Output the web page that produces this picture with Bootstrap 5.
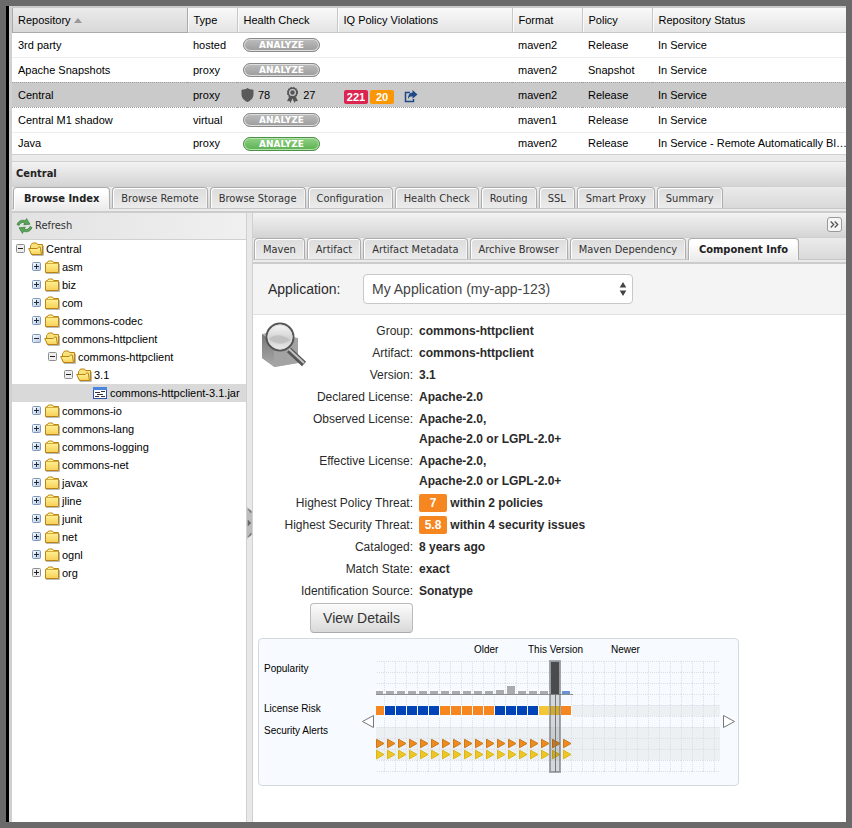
<!DOCTYPE html>
<html lang="en">
<head>
<meta charset="utf-8">
<meta name="viewport" content="width=device-width, initial-scale=1">
<title>Repositories</title>
<link href="https://cdn.jsdelivr.net/npm/bootstrap@5.3.0/dist/css/bootstrap.min.css" rel="stylesheet">
<style>
  :root { --line: #d0d0d0; --ui: "DejaVu Sans Condensed", "Noto Sans", sans-serif; --data: "Liberation Sans", Arial, sans-serif; }
  body { background: #6a6a6a; padding: 6px; font: 11px/16px var(--data); color: #000; }
  .frame { background: #ebebeb; border-left: 3px solid #000; }
  .shell { border-left: 3px solid var(--line); }

  /* Repository grid */
  .repo-grid { table-layout: fixed; background: #fff; border-top: 2px solid #cacaca; border-bottom: 1px solid var(--line); }
  .repo-grid th { height: 25px; padding: 0 6px; font-weight: 400; border-right: 1px solid #c8c8c8; border-bottom: 1px solid #c8c8c8; background: linear-gradient(#f9f9f9, #e4e4e4); box-shadow: inset 1px 0 0 #fafafa; }
  .repo-grid th.sorted { background: linear-gradient(#ebebeb, #d8d8d8); border-color: #aaa; box-shadow: inset 1px 0 0 #aaa; }
  .repo-grid th:last-child { border-right: 0; }
  .repo-grid td { height: 25px; padding: 0 6px; border-bottom: 1px solid #ededed; white-space: nowrap; }
  .repo-grid td:last-child { padding-right: 0; }
  .repo-grid tr:has(+ .picked) td { border-bottom: 0; }
  .repo-grid tr.picked td { background: #cacaca; border-top: 1px dotted #a0a0a0; border-bottom: 1px dotted #a0a0a0; }
  .repo-grid tbody tr:last-child td { height: 22px; border: 0; }
  .pill { display: block; width: 77px; height: 14px; margin-top: 1px; padding: 0; border: 1px solid #8a8a8a; border-radius: 7px; box-shadow: inset 0 0 0 1px #dedede; background: linear-gradient(#bdbdbd, #9c9c9c); color: #fff; font: bold 9px/12px "DejaVu Sans", sans-serif; }
  .pill.ready { border-color: #4d9146; box-shadow: inset 0 0 0 1px #b4e2ac; background: linear-gradient(#8fd184, #5cb052); }
  .tag-row { gap: 2px; padding: 4px 0 0 1px; }
  .tag-row svg { margin-left: 8px; }
  .count-tag { display: inline-block; width: 24px; height: 14px; border-radius: 2px; color: #fff; font: bold 11px/15px var(--data); text-align: center; }
  .tag-critical { background: #dc2450; }
  .tag-severe { background: #fb9605; }

  /* Panel bars and tabs */
  .panel-bar { height: 26px; border-top: 1px solid var(--line); border-bottom: 1px solid var(--line); background: linear-gradient(#f3f3f3, #d4d4d4); }
  .panel-bar.lower { height: 25px; border-top: 0; }
  .panel-head { margin-top: 6px; }
  .panel-title { font: bold 11px/16px var(--ui); color: #222; }
  .strip { background: linear-gradient(#ebebeb, #d9d9d9); border-bottom: 1px solid #c8c8c8; gap: 2px; padding-left: 1px; }
  .strip .tab-btn { height: 21px; padding: 0 8px; border: 1px solid #adadad; border-bottom: 0; border-radius: 4px 4px 0 0; box-shadow: inset 1px 1px 0 #fff, inset -1px 0 0 #f4f4f4; background: linear-gradient(#dcdcdc, #ebebeb); font: 11px/22px var(--ui); color: #333; white-space: nowrap; }
  .strip .tab-btn.active { background: linear-gradient(#fff 20%, #ebebeb); font-weight: 700; color: #222; margin-bottom: -1px; height: 22px; padding: 0 10px; }
  .strip-gap { height: 4px; border-bottom: 2px solid #ccc; }
  .more-btn { width: 15px; height: 15px; padding: 0; border: 1px solid #999; border-radius: 3px; background: #f6f6f6; }

  /* Tree */
  .tree-pane { width: 234px; background: #fff; }
  .tree-tools { height: 27px; background: linear-gradient(90deg, #e2e2e2, #f0f0f0); border-bottom: 1px solid var(--line); }
  .tree-tools button { border: 0; background: none; padding: 0; gap: 2px; font: 11px/16px var(--ui); color: #333; }
  .tree li { display: flex; align-items: center; height: 18px; }
  .tree li.chosen { background: #d9d9d9; }
  .tree .twist { width: 16px; height: 18px; padding: 0; border: 0; background: none; display: flex; align-items: center; justify-content: center; }
  .tree .node-icon { margin-right: 2px; }
  .depth-1 { padding-left: 16px; } .depth-2 { padding-left: 32px; } .depth-3 { padding-left: 48px; } .depth-4 { padding-left: 80px; }
  .splitter { width: 7px; padding-top: 12px; border-left: 1px solid var(--line); border-right: 1px solid var(--line); background: #e8e8e8; }

  /* Component info */
  .info-pane { background: #fff; font-family: var(--data); color: #2a2a2a; }
  .app-bar { background: #f4f4f4; border-bottom: 1px solid #e2e2e2; padding: 10px 15px; font-size: 14px; }
  .app-bar label { width: 95px; }
  .app-bar .form-select { --bs-form-select-bg-img: url("data:image/svg+xml,%3csvg xmlns='http://www.w3.org/2000/svg' viewBox='0 0 8 14'%3e%3cpath fill='%23444' d='M4 0l3.300 5.500H.7zM4 14l3.300-5.500H.7z'/%3e%3c/svg%3e"); width: 270px; height: 30px; padding: 0 24px 0 8px; font: 14px/28px var(--data); color: #444; border: 1px solid #c8c8c8; border-radius: 4px; background-size: 8px 14px; background-position: right 5px center; }
  .facts-wrap { padding-top: 5px; }
  .facts-wrap > * { grid-area: 1 / 1; }
  .facts { grid-template-columns: 160px 1fr; column-gap: 6px; font-size: 12px; line-height: 20px; }
  .facts dt { font-weight: 400; text-align: right; padding: 1px 0; }
  .facts dd { font-weight: 700; margin: 0; padding: 1px 0; }
  .threat { display: inline-block; width: 28px; height: 18px; line-height: 18px; border-radius: 2px; background: #f6861f; color: #fff; text-align: center; }
  .details-btn { width: 103px; height: 30px; padding: 0; border: 1px solid #bbb; border-bottom-color: #aaa; border-radius: 4px; background: linear-gradient(#fcfcfc, #d9d9d9); font: 14px/28px var(--data); color: #333; }
  .chart-card { max-width: 481px; margin: 4px 5px; border: 1px solid #d3d9df; border-radius: 4px; background: #f7fbff; }
  .chart-card svg { display: block; width: 100%; height: auto; font: 10px var(--data); }
</style>
</head>
<body class="d-flex flex-column min-vh-100">

<svg width="0" height="0" class="position-absolute" aria-hidden="true">
  <defs>
    <linearGradient id="gold" x1="0" y1="0" x2="0" y2="1"><stop offset="0" stop-color="#fff9a0"/><stop offset="1" stop-color="#f8cf58"/></linearGradient>
    <linearGradient id="steel" x1="0" y1="0" x2="1" y2="1"><stop offset="0" stop-color="#fff"/><stop offset="1" stop-color="#b5c5dc"/></linearGradient>
    <symbol id="plus" viewBox="0 0 9 9"><rect x=".5" y=".5" width="8" height="8" rx="1" fill="url(#steel)" stroke="#7d98bd"/><path d="M2 4.500h5M4.500 2v5" stroke="#1c2c44"/></symbol>
    <symbol id="plus-end" viewBox="0 0 9 9"><rect x=".5" y=".5" width="8" height="8" rx="1" fill="#eee" stroke="#8d8d8d"/><path d="M2 4.500h5M4.500 2v5" stroke="#222"/></symbol>
    <symbol id="minus" viewBox="0 0 9 9"><rect x=".5" y=".5" width="8" height="8" rx="1" fill="url(#steel)" stroke="#7d98bd"/><path d="M2 4.500h5" stroke="#1c2c44"/></symbol>
    <symbol id="minus-end" viewBox="0 0 9 9"><rect x=".5" y=".5" width="8" height="8" rx="1" fill="#eee" stroke="#8d8d8d"/><path d="M2 4.500h5" stroke="#222"/></symbol>
    <symbol id="folder" viewBox="0 0 16 16"><path d="M2 14.500h13.500V5" fill="none" stroke="#bbb"/><path d="M1.500 13.500v-9l1-1h1l1-1.500h4l1 1.500h5v10z" fill="url(#gold)" stroke="#bb8413"/><path d="M2 4.500h12" stroke="#d9a93a"/></symbol>
    <symbol id="folder-open" viewBox="0 0 16 16"><path d="M4 14.500h11.500V5" fill="none" stroke="#bbb"/><path d="M2.500 8V4.500l1-1 1-1.500h4l1 1.500h5v10h-11z" fill="#f8e07a" stroke="#bb8413"/><path d="M.7 7.500h8.500l1.600-1.500h1.400L13.500 13.500h-10z" fill="url(#gold)" stroke="#bb8413"/></symbol>
    <symbol id="jar" viewBox="0 0 16 16"><rect x="1.500" y="2.500" width="13" height="11" fill="#fff" stroke="#2b57a8"/><path d="M1 3.500h14" stroke="#4b83e0" stroke-width="3"/><path d="M3 7.500h5M9 6.500h4M5 9.500h6M3 11.500h4M9 11.500h4" stroke="#333"/></symbol>
  </defs>
</svg>

<main class="frame d-flex flex-column flex-grow-1">
<div class="shell d-flex flex-column flex-grow-1">

  <table class="repo-grid w-100">
    <colgroup><col width="175"><col width="50"><col width="100"><col width="175"><col width="70"><col width="70"><col></colgroup>
    <thead>
      <tr>
        <th class="sorted" scope="col">Repository <svg width="8" height="5" viewBox="0 0 8 5"><path d="M4 0l4 5H0z" fill="#999"/></svg></th>
        <th scope="col">Type</th><th scope="col">Health Check</th><th scope="col">IQ Policy Violations</th>
        <th scope="col">Format</th><th scope="col">Policy</th><th scope="col">Repository Status</th>
      </tr>
    </thead>
    <tbody>
      <tr><td>3rd party</td><td>hosted</td><td><button class="pill" type="button">ANALYZE</button></td><td></td><td>maven2</td><td>Release</td><td>In Service</td></tr>
      <tr><td>Apache Snapshots</td><td>proxy</td><td><button class="pill" type="button">ANALYZE</button></td><td></td><td>maven2</td><td>Snapshot</td><td>In Service</td></tr>
      <tr class="picked"><td>Central</td><td>proxy</td>
        <td class="ps-1"><div class="d-flex align-items-center">
          <svg width="13" height="14" viewBox="0 0 13 14"><path d="M6.500 0C5 1.200 3 1.700.5 1.700V6c0 4 2.500 6.500 6 8 3.500-1.500 6-4 6-8V1.700C10 1.700 8 1.200 6.500 0z" fill="#5a5a5a"/></svg>
          <span class="ms-1">78</span>
          <svg class="ms-3" width="13" height="16" viewBox="0 0 13 16"><path d="M3.500 9L1 14.300l2.300-.3L4.500 16 6.500 11.500 8.500 16l1.200-2 2.300.3L9.500 9z" fill="#555"/><circle cx="6.500" cy="5.500" r="4.300" fill="#cacaca" stroke="#555" stroke-width="1.600"/><circle cx="6.500" cy="5.500" r="5" fill="none" stroke="#555" stroke-width="1.200" stroke-dasharray="1.600 1"/><circle cx="6.500" cy="5.500" r="2.200" fill="#555"/></svg>
          <span class="ms-1">27</span></div></td>
        <td><div class="tag-row d-flex align-items-center"><span class="count-tag tag-critical">221</span><span class="count-tag tag-severe">20</span>
          <svg width="14" height="13" viewBox="0 0 14 13"><path d="M6 2.500H1.500v9h8V9" fill="none" stroke="#1f4a85" stroke-width="1.500"/><path d="M8.500 0l5 4.500-5 4.300V6.300C6.500 6.300 5 7 4 9c0-4 1.800-6.300 4.500-6.500z" fill="#1f4a85"/></svg></div></td>
        <td>maven2</td><td>Release</td><td>In Service</td></tr>
      <tr><td>Central M1 shadow</td><td>virtual</td><td><button class="pill" type="button">ANALYZE</button></td><td></td><td>maven1</td><td>Release</td><td>In Service</td></tr>
      <tr><td>Java</td><td>proxy</td><td><button class="pill ready" type="button">ANALYZE</button></td><td></td><td>maven2</td><td>Release</td><td>In Service - Remote Automatically Bl…</td></tr>
    </tbody>
  </table>

  <div class="panel-bar panel-head d-flex align-items-center px-1"><h1 class="panel-title m-0">Central</h1></div>
  <div class="strip d-flex align-items-end" role="tablist">
    <button class="tab-btn active" role="tab" type="button">Browse Index</button>
    <button class="tab-btn" role="tab" type="button">Browse Remote</button>
    <button class="tab-btn" role="tab" type="button">Browse Storage</button>
    <button class="tab-btn" role="tab" type="button">Configuration</button>
    <button class="tab-btn" role="tab" type="button">Health Check</button>
    <button class="tab-btn" role="tab" type="button">Routing</button>
    <button class="tab-btn" role="tab" type="button">SSL</button>
    <button class="tab-btn" role="tab" type="button">Smart Proxy</button>
    <button class="tab-btn" role="tab" type="button">Summary</button>
  </div>
  <div class="strip-gap"></div>

  <div class="d-flex flex-grow-1">
    <nav class="tree-pane flex-shrink-0" aria-label="Index tree">
      <div class="tree-tools d-flex align-items-center px-1">
        <button type="button" class="d-flex align-items-center">
          <svg width="17" height="16" viewBox="0 0 17 16"><g fill="#5aa558" stroke="#357d38" stroke-width=".7"><path d="M1 6.500C2.500 2.500 6 1.500 9.500 2.700L10.500.6l3.500 5.600-6.200.6 1-2C6 4 4 4.800 3 7.500z"/><path d="M16 9.500c-1.500 4-5 5-8.500 3.800l-1 2.100L3 9.800l6.200-.6-1 2c2.800.8 4.800 0 5.800-2.700z"/></g></svg>
          <span>Refresh</span></button>
      </div>
      <ul class="tree list-unstyled m-0">
        <li><button class="twist" aria-label="Collapse"><svg width="9" height="9"><use href="#minus-end"/></svg></button><svg class="node-icon" width="16" height="16"><use href="#folder-open"/></svg>Central</li>
        <li class="depth-1"><button class="twist" aria-label="Expand"><svg width="9" height="9"><use href="#plus"/></svg></button><svg class="node-icon" width="16" height="16"><use href="#folder"/></svg>asm</li>
        <li class="depth-1"><button class="twist" aria-label="Expand"><svg width="9" height="9"><use href="#plus"/></svg></button><svg class="node-icon" width="16" height="16"><use href="#folder"/></svg>biz</li>
        <li class="depth-1"><button class="twist" aria-label="Expand"><svg width="9" height="9"><use href="#plus"/></svg></button><svg class="node-icon" width="16" height="16"><use href="#folder"/></svg>com</li>
        <li class="depth-1"><button class="twist" aria-label="Expand"><svg width="9" height="9"><use href="#plus"/></svg></button><svg class="node-icon" width="16" height="16"><use href="#folder"/></svg>commons-codec</li>
        <li class="depth-1"><button class="twist" aria-label="Collapse"><svg width="9" height="9"><use href="#minus"/></svg></button><svg class="node-icon" width="16" height="16"><use href="#folder-open"/></svg>commons-httpclient</li>
        <li class="depth-2"><button class="twist" aria-label="Collapse"><svg width="9" height="9"><use href="#minus-end"/></svg></button><svg class="node-icon" width="16" height="16"><use href="#folder-open"/></svg>commons-httpclient</li>
        <li class="depth-3"><button class="twist" aria-label="Collapse"><svg width="9" height="9"><use href="#minus-end"/></svg></button><svg class="node-icon" width="16" height="16"><use href="#folder-open"/></svg>3.1</li>
        <li class="depth-4 chosen"><svg class="node-icon" width="16" height="16"><use href="#jar"/></svg>commons-httpclient-3.1.jar</li>
        <li class="depth-1"><button class="twist" aria-label="Expand"><svg width="9" height="9"><use href="#plus"/></svg></button><svg class="node-icon" width="16" height="16"><use href="#folder"/></svg>commons-io</li>
        <li class="depth-1"><button class="twist" aria-label="Expand"><svg width="9" height="9"><use href="#plus"/></svg></button><svg class="node-icon" width="16" height="16"><use href="#folder"/></svg>commons-lang</li>
        <li class="depth-1"><button class="twist" aria-label="Expand"><svg width="9" height="9"><use href="#plus"/></svg></button><svg class="node-icon" width="16" height="16"><use href="#folder"/></svg>commons-logging</li>
        <li class="depth-1"><button class="twist" aria-label="Expand"><svg width="9" height="9"><use href="#plus"/></svg></button><svg class="node-icon" width="16" height="16"><use href="#folder"/></svg>commons-net</li>
        <li class="depth-1"><button class="twist" aria-label="Expand"><svg width="9" height="9"><use href="#plus"/></svg></button><svg class="node-icon" width="16" height="16"><use href="#folder"/></svg>javax</li>
        <li class="depth-1"><button class="twist" aria-label="Expand"><svg width="9" height="9"><use href="#plus"/></svg></button><svg class="node-icon" width="16" height="16"><use href="#folder"/></svg>jline</li>
        <li class="depth-1"><button class="twist" aria-label="Expand"><svg width="9" height="9"><use href="#plus"/></svg></button><svg class="node-icon" width="16" height="16"><use href="#folder"/></svg>junit</li>
        <li class="depth-1"><button class="twist" aria-label="Expand"><svg width="9" height="9"><use href="#plus"/></svg></button><svg class="node-icon" width="16" height="16"><use href="#folder"/></svg>net</li>
        <li class="depth-1"><button class="twist" aria-label="Expand"><svg width="9" height="9"><use href="#plus"/></svg></button><svg class="node-icon" width="16" height="16"><use href="#folder"/></svg>ognl</li>
        <li class="depth-1"><button class="twist" aria-label="Expand"><svg width="9" height="9"><use href="#plus-end"/></svg></button><svg class="node-icon" width="16" height="16"><use href="#folder"/></svg>org</li>
      </ul>
    </nav>

    <div class="splitter d-flex align-items-center justify-content-center flex-shrink-0">
      <svg width="5" height="32" viewBox="0 0 5 32"><path d="M0 0l5 4v24l-5 4z" fill="#bdbdbd"/><path d="M1 2l3 4v-2zM1 13l3 3-3 3zM1 30l3-4v2z" fill="#666" stroke="#777" stroke-width=".6"/></svg>
    </div>

    <section class="d-flex flex-column flex-grow-1">
      <div class="panel-bar lower d-flex align-items-center justify-content-end px-1">
        <button class="more-btn d-flex align-items-center justify-content-center" type="button" aria-label="Collapse panel"><svg width="9" height="7" viewBox="0 0 9 7"><path d="M.7.5l3 3-3 3M4.700.5l3 3-3 3" fill="none" stroke="#555" stroke-width="1.300"/></svg></button>
      </div>
      <div class="strip d-flex align-items-end" role="tablist">
        <button class="tab-btn" role="tab" type="button">Maven</button>
        <button class="tab-btn" role="tab" type="button">Artifact</button>
        <button class="tab-btn" role="tab" type="button">Artifact Metadata</button>
        <button class="tab-btn" role="tab" type="button">Archive Browser</button>
        <button class="tab-btn" role="tab" type="button">Maven Dependency</button>
        <button class="tab-btn active" role="tab" type="button">Component Info</button>
      </div>
      <div class="strip-gap"></div>

      <div class="info-pane flex-grow-1">
        <div class="app-bar d-flex align-items-center">
          <label for="app">Application:</label>
          <select id="app" class="form-select"><option>My Application (my-app-123)</option></select>
        </div>
        <div class="facts-wrap d-grid">
          <svg class="ms-2" width="48" height="48" viewBox="0 0 48 48">
            <defs><linearGradient id="boxface" x1="0" y1="0" x2="0" y2="1"><stop offset="0" stop-color="#777"/><stop offset="1" stop-color="#aaa"/></linearGradient>
            <linearGradient id="lens" x1="0" y1="0" x2="0" y2="1"><stop offset="0" stop-color="#f8f8f8"/><stop offset=".6" stop-color="#cfcfcf"/><stop offset="1" stop-color="#efefef"/></linearGradient></defs>
            <path d="M1 14l12-3 24 7v25l-23 4L1 38z" fill="#b5b5b5"/><path d="M1 14l12 9v24L1 38z" fill="url(#boxface)"/><path d="M13 23l24-5v25l-24 4z" fill="#a3a3a3"/>
            <path d="M28 30l15 14" stroke="#555" stroke-width="6"/><path d="M28 29l15 14" stroke="#c4c4c4" stroke-width="2"/>
            <circle cx="19" cy="17" r="13.500" fill="url(#lens)" stroke="#555" stroke-width="2"/><circle cx="19" cy="17" r="12" fill="none" stroke="#ddd"/><path d="M8 19c5-5 14-5 21 1-6 5-14 5-21-1z" fill="#bbb" opacity=".7"/>
          </svg>
          <dl class="facts d-grid mb-0">
            <dt>Group:</dt><dd>commons-httpclient</dd>
            <dt>Artifact:</dt><dd>commons-httpclient</dd>
            <dt>Version:</dt><dd>3.1</dd>
            <dt>Declared License:</dt><dd>Apache-2.0</dd>
            <dt>Observed License:</dt><dd>Apache-2.0,<br>Apache-2.0 or LGPL-2.0+</dd>
            <dt>Effective License:</dt><dd>Apache-2.0,<br>Apache-2.0 or LGPL-2.0+</dd>
            <dt>Highest Policy Threat:</dt><dd><span class="threat">7</span> within 2 policies</dd>
            <dt>Highest Security Threat:</dt><dd><span class="threat">5.8</span> within 4 security issues</dd>
            <dt>Cataloged:</dt><dd>8 years ago</dd>
            <dt>Match State:</dt><dd>exact</dd>
            <dt>Identification Source:</dt><dd>Sonatype</dd>
            <dt><button class="details-btn" type="button">View Details</button></dt><dd></dd>
          </dl>
        </div>

        <div class="chart-card">
          <svg viewBox="259 639 479 146" role="img" aria-label="Version history">
            <defs>
              <pattern id="cells" patternUnits="userSpaceOnUse" x="384" y="661" width="11" height="11"><path d="M0 .5h11M.5 0v11" stroke="#d9e0ea" stroke-dasharray="1 1" fill="none"/></pattern>
              <pattern id="bars" patternUnits="userSpaceOnUse" x="386" y="691" width="11" height="3"><rect width="8" height="3" fill="#a9abae"/></pattern>
              <pattern id="gaps" patternUnits="userSpaceOnUse" x="385" y="705" width="11" height="12"><rect x="10" width="1" height="12" fill="#f7fbff"/></pattern>
              <pattern id="alerts" patternUnits="userSpaceOnUse" x="386" y="738" width="11" height="22"><path d="M1.500 1.200v8.600l7.500-4.300z" fill="#f08a1c" stroke="#c8791b"/><path d="M1.500 12.200v8.600l7.500-4.300z" fill="#eec62c" stroke="#d9b70f"/></pattern>
            </defs>
            <path d="M572 705h148v11H572zM376 727h344v33H376z" fill="#edf0f3"/>
            <rect x="376" y="661" width="344" height="112" fill="url(#cells)"/>
            <rect x="376" y="691" width="184" height="3" fill="url(#bars)"/>
            <path d="M496 690h8v4h-8zM507 686h8v8h-8z" fill="#a9abae"/>
            <path d="M562 691h8v3h-8z" fill="#6b93d3"/>
            <path d="M376 694.500h197" stroke="#8c8f92"/>
            <path d="M376 705h196v12H376z" fill="#f7fbff"/>
            <path d="M376 706h8v9h-8zM440 706h54v9h-54zM561 706h10v9h-10z" fill="#f6861f"/>
            <path d="M385 706h54v9h-54zM495 706h43v9h-43z" fill="#0044b8"/>
            <path d="M539 706h21v9h-21z" fill="#f5c638"/>
            <rect x="376" y="705" width="195" height="12" fill="url(#gaps)"/>
            <rect x="376" y="738" width="196" height="22" fill="url(#alerts)"/>
            <path d="M550 661h10v111h-10z" fill="#000" fill-opacity=".14" stroke="#6f7478" stroke-opacity=".6" stroke-width="2"/>
            <path d="M555.500 695v77" stroke="#777"/>
            <path d="M551 662h8v32h-8z" fill="#4a4b4d"/>
            <g fill="#fff" stroke="#777"><path d="M373.500 715.500v12l-11-6z"/><path d="M723.500 715.500v12l11-6z"/></g>
            <g fill="#000"><text x="264" y="672">Popularity</text><text x="264" y="712">License Risk</text><text x="264" y="734">Security Alerts</text>
            <text x="474" y="653">Older</text><text x="528" y="653">This Version</text><text x="611" y="653">Newer</text></g>
          </svg>
        </div>
      </div>
    </section>
  </div>
</div>
</main>
<script src="https://cdn.jsdelivr.net/npm/bootstrap@5.3.0/dist/js/bootstrap.bundle.min.js"></script>
</body>
</html>
